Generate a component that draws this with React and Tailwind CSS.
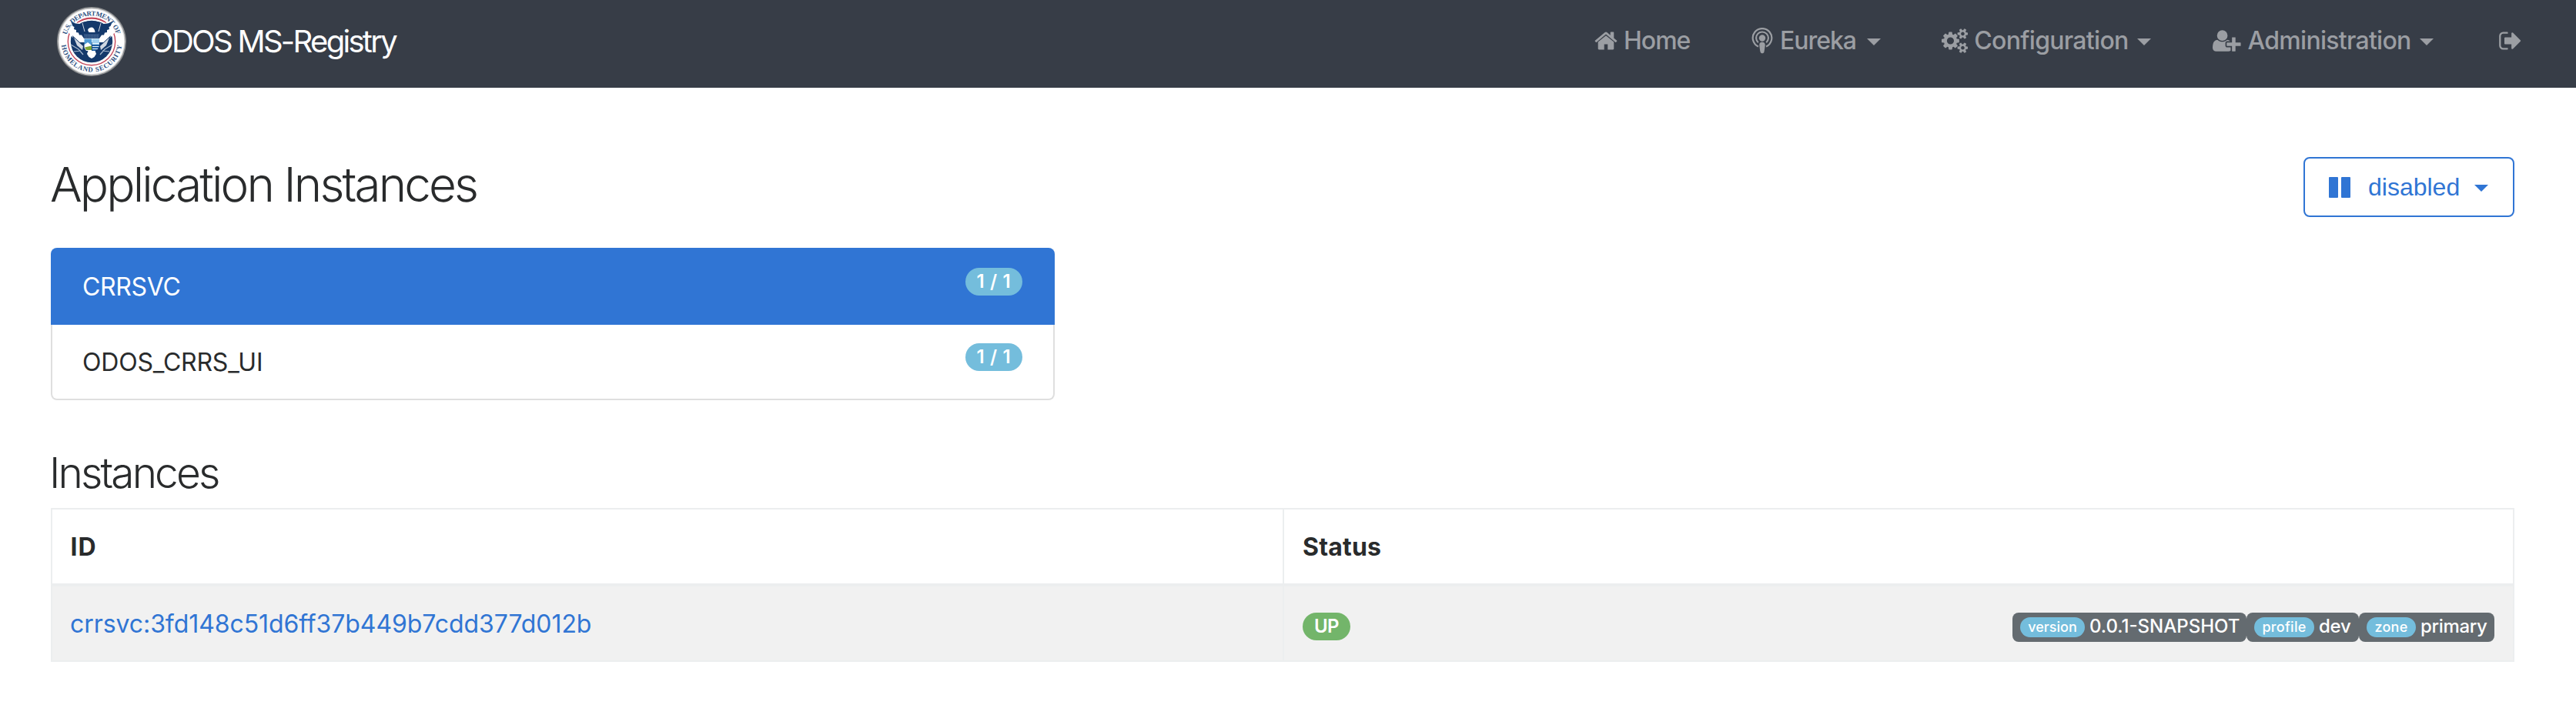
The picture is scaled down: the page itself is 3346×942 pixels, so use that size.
const HOME =
  "M1472 992v480q0 26-19 45t-45 19h-384v-384h-256v384h-384q-26 0-45-19t-19-45v-480q0-1 .5-3t.5-3l575-474 575 474q1 2 1 6zm223-69l-62 74q-8 9-21 11h-3q-13 0-21-7l-692-577-692 577q-12 8-24 7-13-2-21-11l-62-74q-8-10-7-23.5t11-21.5l719-599q32-26 76-26t76 26l244 204v-195q0-14 9-23t23-9h192q14 0 23 9t9 23v408l219 182q10 8 11 21.5t-7 23.5z";
const COGS =
  "M896 896q0-106-75-181t-181-75-181 75-75 181 75 181 181 75 181-75 75-181zm768 512q0-52-38-90t-90-38-90 38-38 90q0 53 37.5 90.5t90.5 37.5 90.5-37.5 37.5-90.5zm0-1024q0-52-38-90t-90-38-90 38-38 90q0 53 37.5 90.5t90.5 37.5 90.5-37.5 37.5-90.5zm-384 421v185q0 10-7 19.5t-16 10.5l-155 24q-11 35-32 76 34 48 90 115 7 11 7 20 0 12-7 19-23 30-82.5 89.5t-78.5 59.5q-11 0-21-7l-115-90q-37 19-77 31-11 108-23 155-7 24-30 24h-186q-11 0-20-7.5t-10-17.5l-23-153q-34-10-75-31l-118 89q-7 7-20 7-11 0-21-8-144-133-144-160 0-9 7-19 10-14 41-53t47-61q-23-44-35-82l-152-24q-10-1-17-9.5t-7-19.5v-185q0-10 7-19.5t16-10.5l155-24q11-35 32-76-34-48-90-115-7-11-7-20 0-12 7-20 22-30 82-89t79-59q11 0 21 7l115 90q34-18 77-32 11-108 23-154 7-24 30-24h186q11 0 20 7.5t10 17.5l23 153q34 10 75 31l118-89q8-7 20-7 11 0 21 8 144 133 144 160 0 8-7 19-12 16-42 54t-45 60q23 48 34 82l152 23q10 2 17 10.5t7 19.5zm640 533v140q0 16-149 31-12 27-30 52 51 113 51 138 0 4-4 7-122 71-124 71-8 0-46-47t-52-68q-20 2-30 2t-30-2q-14 21-52 68t-46 47q-2 0-124-71-4-3-4-7 0-25 51-138-18-25-30-52-149-15-149-31v-140q0-16 149-31 13-29 30-52-51-113-51-138 0-4 4-7 4-2 35-20t59-34 30-16q8 0 46 46.5t52 67.5q20-2 30-2t30 2q51-71 92-112l6-2q4 0 124 70 4 3 4 7 0 25-51 138 17 23 30 52 149 15 149 31zm0-1024v140q0 16-149 31-12 27-30 52 51 113 51 138 0 4-4 7-122 71-124 71-8 0-46-47t-52-68q-20 2-30 2t-30-2q-14 21-52 68t-46 47q-2 0-124-71-4-3-4-7 0-25 51-138-18-25-30-52-149-15-149-31v-140q0-16 149-31 13-29 30-52-51-113-51-138 0-4 4-7 4-2 35-20t59-34 30-16q8 0 46 46.5t52 67.5q20-2 30-2t30 2q51-71 92-112l6-2q4 0 124 70 4 3 4 7 0 25-51 138 17 23 30 52 149 15 149 31z";
const USER_PLUS =
  "M704 896q-159 0-271.5-112.5t-112.5-271.5 112.5-271.5 271.5-112.5 271.5 112.5 112.5 271.5-112.5 271.5-271.5 112.5zm960 128h352q13 0 22.5 9.5t9.5 22.5v192q0 13-9.5 22.5t-22.5 9.5h-352v352q0 13-9.5 22.5t-22.5 9.5h-192q-13 0-22.5-9.5t-9.5-22.5v-352h-352q-13 0-22.5-9.5t-9.5-22.5v-192q0-13 9.5-22.5t22.5-9.5h352v-352q0-13 9.5-22.5t22.5-9.5h192q13 0 22.5 9.5t9.5 22.5v352zm-736 224q0 52 38 90t90 38h256v238q-68 50-171 50h-874q-121 0-194-69t-73-190q0-53 3.5-103.5t14-109 26.5-108.5 43-97.5 62-81 85.5-53.5 111.5-20q19 0 39 17 79 61 154.5 91.5t164.5 30.5 164.5-30.5 154.5-91.5q20-17 39-17 132 0 217 96h-223q-52 0-90 38t-38 90v192z";
const SIGN_OUT =
  "M704 1440q0 4 1 20t.5 26.5-3 23.5-10 19.5-20.5 6.5h-320q-119 0-203.5-84.5t-84.5-203.5v-704q0-119 84.5-203.5t203.5-84.5h320q13 0 22.5 9.5t9.5 22.5q0 4 1 20t.5 26.5-3 23.5-10 19.5-20.5 6.5h-320q-66 0-113 47t-47 113v704q0 66 47 113t113 47h312l11.5 1 11.5 3 8 5.5 7 9 2 13.5zm928-544q0 26-19 45l-544 544q-19 19-45 19t-45-19-19-45v-288h-448q-26 0-45-19t-19-45v-384q0-26 19-45t45-19h448v-288q0-26 19-45t45-19 45 19l544 544q19 19 19 45z";

function Seal() {
  return (
    <svg viewBox="0 0 90 90" className="size-[90px] shrink-0">
      <defs>
        <path id="seal-top" d="M12.6 36.3A33.5 33.5 0 0 1 77.4 36.3" />
        <path id="seal-bottom" d="M5.8 49.8A39.5 39.5 0 0 0 84.2 49.8" />
      </defs>
      <circle cx="45" cy="45" r="45" fill="#8b8d8f" />
      <circle cx="45" cy="45" r="43.500" fill="#d9d9d9" />
      <circle cx="45" cy="45" r="42.300" fill="#fff" />
      <circle cx="45" cy="45" r="30.7" fill="none" stroke="#c4485a" strokeWidth="1.4" />
      <circle cx="45" cy="45" r="27.2" fill="#14396b" />
      <path d="M14 32L20 16L30 20L60 20L70 16L76 32L64 46L26 46z" fill="#fff" />
      <path d="M26 20.5Q45 9.500 64 20.5" fill="none" stroke="#c4485a" strokeWidth="1.4" />
      <path
        d="M18 18.500Q23 22 29.500 22Q33 18.500 45 18.500Q57 18.500 60.500 22Q67 22 72 18.500L69.500 25L67.500 26L68 29L65 30L65 33L62 33.500L61 36.500L58 36.500L55 41L35 41L32 36.500L29 36.500L28 33.500L25 33L25 30L22 29L22.500 26L20.500 25z"
        fill="#14396b"
      />
      <path d="M33 21L36 32M57 21L54 32" stroke="#fff" strokeWidth=".8" />
      <path d="M20 37L34 50L35 57L40 63L50 63L55 57L56 50L70 37L66 49L58 60L52 61L50 70L40 70L38 61L32 60L24 49z" fill="#14396b" />
      <path d="M22 40L34 51L33 56L26 50zM68 40L56 51L57 56L64 50z" fill="#fff" opacity=".8" />
      <path d="M18 49L28 55L34 62M72 49L62 55L56 62M22 58L31 57M68 58L59 57" stroke="#a9b9ce" strokeWidth="1.2" fill="none" />
      <path d="M41.500 33L40 30Q41 26.500 45.500 26.500Q49 27.500 49.500 33z" fill="#fff" />
      <path d="M35 35H55V41H35z" fill="#2b4f80" />
      <path d="M36 37H54M36 39.300H54" stroke="#6d86a9" strokeWidth=".7" strokeDasharray="1 1" />
      <path d="M35.500 41.500H45V49H35.500z" fill="#4d9ad4" />
      <path d="M45.500 41.500H55V49H45.500z" fill="#9fd0ee" />
      <path d="M35.500 49L40 46L45 50V57H38L35.500 53z" fill="#fff" />
      <path d="M36 52.500L45 50.500V56H38z" fill="#7fa637" />
      <path d="M45.500 49H55L54 54L49 57.500L45.500 57z" fill="#1f5fa0" />
      <path d="M46 47.500H54.500M46 51.500H54.500M46 54.500H53" stroke="#e8f4fb" strokeWidth="1" />
      <path d="M40.500 57H49.500L51 61L48.500 65L45 67L41.500 65L39 61z" fill="#fff" />
      <g fill="#2c4f7f" fontFamily="'Liberation Serif', serif" fontWeight="700" fontSize="8.800">
        <text>
          <textPath href="#seal-top" textLength="87">U.S. DEPARTMENT OF</textPath>
        </text>
        <text>
          <textPath href="#seal-bottom" textLength="114">HOMELAND SECURITY</textPath>
        </text>
      </g>
    </svg>
  );
}

function Glyph({ d, className, width = 1792 }) {
  return (
    <svg viewBox={`0 0 ${width} 1792`} fill="currentColor" className={`h-8 shrink-0 ${className}`}>
      <path d={d} />
    </svg>
  );
}

function Podcast() {
  return (
    <svg viewBox="0 0 28 34" className="mr-[9px] h-[34px] w-7 shrink-0" fill="none" stroke="currentColor">
      <path d="M9 24.600A12.300 12.300 0 1 1 19 24.600" strokeWidth="2.200" />
      <path d="M8.800 19.300A7.900 7.900 0 1 1 19.200 19.300" strokeWidth="2.100" />
      <circle cx="14" cy="13.500" r="4.200" fill="currentColor" stroke="none" />
      <path d="M14 18.700c2.400 0 3.700 1.300 3.700 3.300 0 2.400-.8 7.500-1.200 9.200-.3 1.400-1.200 2-2.500 2s-2.200-.6-2.500-2c-.4-1.700-1.200-6.800-1.200-9.200 0-2 1.300-3.300 3.700-3.300z" fill="currentColor" stroke="none" />
    </svg>
  );
}

function Caret({ className }) {
  return (
    <svg viewBox="0 0 18 9" fill="currentColor" className={`h-[9px] w-[18px] shrink-0 ${className}`}>
      <path d="M0 0H18L9 9z" />
    </svg>
  );
}

function Navbar() {
  return (
    <nav className="flex h-[114px] items-start bg-[#373d47]">
      <div className="ml-[74px] flex h-[107px] items-center">
        <Seal />
        <span className="ml-[31px] text-[40px] leading-none font-[430] tracking-[-2.700px] text-white">ODOS MS-Registry</span>
      </div>
      <ul className="ml-auto flex h-[105px] items-center text-[32px] leading-none font-[450] text-[#9b9ea3]">
        <li className="flex w-[205px] items-center">
          <Glyph d={HOME} className="mr-[7px] w-8" />
          <span className="tracking-[-1px]">Home</span>
        </li>
        <li className="flex w-[247px] items-center">
          <Podcast />
          <span className="w-[98px] tracking-[-1.050px]">Eureka</span>
          <Caret className="ml-[15px] mt-1" />
        </li>
        <li className="flex w-[352px] items-center">
          <Glyph d={COGS} width={1920} className="mr-2 w-[34.300px]" />
          <span className="w-[197px] tracking-[-0.700px]">Configuration</span>
          <Caret className="ml-[15px] mt-1" />
        </li>
        <li className="flex w-[371px] items-center">
          <Glyph d={USER_PLUS} width={2048} className="mr-[9px] w-[36.600px]" />
          <span className="w-[209px] tracking-[-0.720px]">Administration</span>
          <Caret className="ml-[14px] mt-1" />
        </li>
        <li className="flex w-[101px] items-center">
          <Glyph d={SIGN_OUT} className="w-8" />
        </li>
      </ul>
    </nav>
  );
}

const apps = [
  { name: "CRRSVC", count: "1 / 1", active: true },
  { name: "ODOS_CRRS_UI", count: "1 / 1", active: false },
];

const tags = [
  { key: "version", value: "0.0.1-SNAPSHOT", box: "w-[304px]", pill: "w-[84px]", track: "tracking-normal", text: "tracking-normal" },
  { key: "profile", value: "dev", box: "w-[146px]", pill: "w-[78px]", track: "tracking-[0.300px]", text: "tracking-[-0.240px]" },
  { key: "zone", value: "primary", box: "w-[176px]", pill: "w-[64px]", track: "tracking-[0.300px]", text: "tracking-[-0.350px]" },
];

function AppList() {
  return (
    <ul className="mt-[40px] w-[1304px] text-[32px] leading-none">
      {apps.map((a) => (
        <li
          key={a.name}
          className={
            a.active
              ? "flex h-[100px] items-start justify-between rounded-t-lg bg-[#3075d4] pt-[26px] pr-[42px] pl-[41px] text-white"
              : "flex h-[98px] items-start justify-between rounded-b-lg border-x-2 border-b-2 border-[#dfdfdf] pt-[24px] pr-[40px] pl-[39px]"
          }
        >
          <span className={a.active ? "mt-[9px] tracking-[-0.320px]" : "mt-[9px] tracking-[-0.200px]"}>{a.name}</span>
          <span className="flex h-9 w-[74px] items-center justify-center rounded-full bg-[#74bddc] text-2xl leading-none font-semibold tracking-[0.670px] text-white">
            {a.count}
          </span>
        </li>
      ))}
    </ul>
  );
}

function InstancesTable() {
  return (
    <div className="mt-[18px] h-[200px] border-2 border-[#eceeef] text-[32px] leading-none">
      <div className="flex h-[100px] border-b-4 border-[#eceeef] pt-[2px] font-bold">
        <div className="-mt-[2px] flex w-[1600px] items-center border-r-2 border-[#eceeef] pt-[2px] pl-[23.500px] tracking-[1px]">ID</div>
        <div className="flex items-center pl-[24px] tracking-[0.190px]">Status</div>
      </div>
      <div className="flex h-24 bg-[#f1f1f1]">
        <div className="flex w-[1600px] items-center border-r-2 border-[#eceeef] pt-[2px] pl-[23px] tracking-[-0.070px] text-[#3075d4]">
          crrsvc:3fd148c51d6ff37b449b7cdd377d012b
        </div>
        <div className="flex grow items-start pt-[34px] pr-6 pl-6 text-2xl leading-none text-white">
          <span className="flex h-9 w-[62px] items-center justify-center rounded-full bg-[#73b56a] font-semibold tracking-[-0.500px]">UP</span>
          <div className="ml-auto flex">
            {tags.map((t) => (
              <span key={t.key} className={`flex h-[38px] items-center rounded-lg bg-[#646b70] pl-[10px] font-medium ${t.box}`}>
                <span className={`flex h-[26px] items-center justify-center rounded-full bg-[#74bddc] text-lg leading-none font-medium ${t.pill} ${t.track}`}>
                  {t.key}
                </span>
                <span className={`mb-[3px] ml-[6px] ${t.text}`}>{t.value}</span>
              </span>
            ))}
          </div>
        </div>
      </div>
    </div>
  );
}

export default function App() {
  return (
    <div className="h-[942px] overflow-hidden bg-white font-['Inter','Liberation_Sans',sans-serif] text-[#292b2c]">
      <Navbar />
      <main className="flex flex-col pt-[90px] pr-[80px] pl-[66px]">
        <div className="flex h-[78px] items-start justify-between">
          <h2 className="mt-[5px] -ml-px text-[62px] leading-[62px] font-[350] tracking-[-2.900px]">Application Instances</h2>
          <button className="flex h-[78px] w-[274px] items-center rounded-lg border-2 border-[#3075d4] pl-[31px] font-['Liberation_Sans',Arial,sans-serif] text-[32px] leading-none text-[#3075d4]">
            <svg viewBox="0 0 28 27" fill="currentColor" className="h-[27px] w-7 shrink-0">
              <rect width="12" height="27" rx="1" />
              <rect x="16" width="12" height="27" rx="1" />
            </svg>
            <span className="ml-[23px]">disabled</span>
            <Caret className="ml-[19px] mt-[3px]" />
          </button>
        </div>
        <AppList />
        <h3 className="mt-[67px] -ml-[2px] text-[55px] leading-[55px] font-[350] tracking-[-2.900px]">Instances</h3>
        <InstancesTable />
      </main>
    </div>
  );
}
